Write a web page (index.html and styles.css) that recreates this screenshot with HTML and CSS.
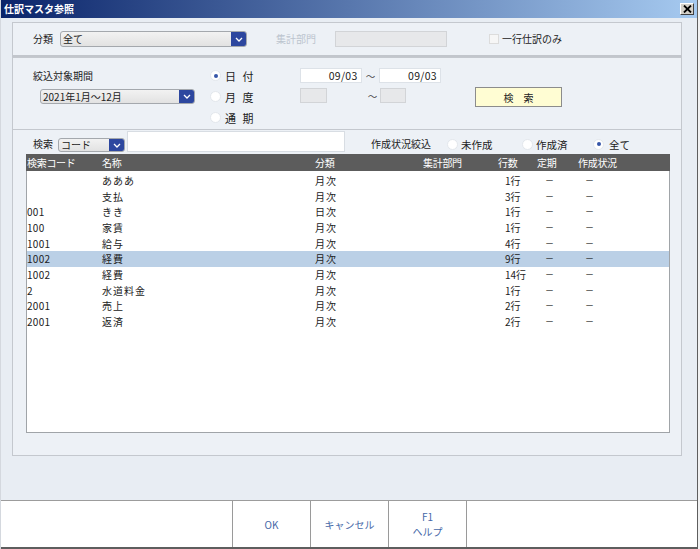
FILE: index.html
```html
<!DOCTYPE html>
<html lang="ja">
<head>
<meta charset="utf-8">
<title>仕訳マスタ参照</title>
<link rel="stylesheet" href="styles.css">
</head>
<body>
<div class="window">
  <div class="titlebar">
    <span class="title">仕訳マスタ参照</span>
    <span class="close"><svg width="9" height="8" viewBox="0 0 9 8"><path d="M1 0.5 L8 7.5 M8 0.5 L1 7.5" stroke="#000" stroke-width="1.8" fill="none"/></svg></span>
  </div>
  <div class="main">
    <div class="panel p1">
      <span class="lbl l-bunrui">分類</span>
      <div class="select s-bunrui"><span class="sel-text">全て</span><span class="sel-btn"><svg width="8" height="5" viewBox="0 0 8 5"><path d="M1 1 L4 4 L7 1" stroke="#fff" stroke-width="1.3" fill="none"/></svg></span></div>
      <span class="lbl disabled l-shukei">集計部門</span>
      <div class="field dis i-shukei"></div>
      <span class="checkbox"></span>
      <span class="lbl l-ichigyo">一行仕訳のみ</span>
    </div>
    <div class="panel p2">
      <div class="col-period">
        <div class="lbl period-lbl">絞込対象期間</div>
        <div class="select s-period"><span class="sel-text">2021年1月～12月</span><span class="sel-btn"><svg width="8" height="5" viewBox="0 0 8 5"><path d="M1 1 L4 4 L7 1" stroke="#fff" stroke-width="1.3" fill="none"/></svg></span></div>
      </div>
      <div class="col-radio">
        <div class="radio-row"><span class="radio on"></span><span class="rlbl">日 付</span></div>
        <div class="radio-row"><span class="radio"></span><span class="rlbl">月 度</span></div>
        <div class="radio-row"><span class="radio"></span><span class="rlbl">通 期</span></div>
      </div>
      <div class="col-dates">
        <div class="date-row r1"><div class="field date">09/03</div><span class="tilde">～</span><div class="field date">09/03</div></div>
        <div class="date-row r2"><div class="field dis small"></div><span class="tilde t2">～</span><div class="field dis small2"></div></div>
      </div>
      <button class="search-btn">検 索</button>
    </div>
    <div class="panel p3">
      <div class="search-row">
        <span class="lbl l-kensaku">検索</span>
        <div class="select s-code"><span class="sel-text">コード</span><span class="sel-btn"><svg width="8" height="5" viewBox="0 0 8 5"><path d="M1 1 L4 4 L7 1" stroke="#fff" stroke-width="1.3" fill="none"/></svg></span></div>
        <div class="field search-input"></div>
        <span class="lbl l-status">作成状況絞込</span>
        <span class="opt o1"><span class="radio"></span><span class="olbl">未作成</span></span>
        <span class="opt o2"><span class="radio"></span><span class="olbl">作成済</span></span>
        <span class="opt o3"><span class="radio on"></span><span class="olbl">全て</span></span>
      </div>
      <div class="table">
        <div class="row head">
          <span class="c code">検索コード</span><span class="c name">名称</span><span class="c cls">分類</span><span class="c dept">集計部門</span><span class="c lines">行数</span><span class="c per">定期</span><span class="c stat">作成状況</span>
        </div>
        <div class="tbody">
          <div class="row"><span class="c code"></span><span class="c name">あああ</span><span class="c cls">月次</span><span class="c dept"></span><span class="c lines">1行</span><span class="c per">－</span><span class="c stat">－</span></div>
          <div class="row"><span class="c code"></span><span class="c name">支払</span><span class="c cls">月次</span><span class="c dept"></span><span class="c lines">3行</span><span class="c per">－</span><span class="c stat">－</span></div>
          <div class="row"><span class="c code">001</span><span class="c name">きき</span><span class="c cls">日次</span><span class="c dept"></span><span class="c lines">1行</span><span class="c per">－</span><span class="c stat">－</span></div>
          <div class="row"><span class="c code">100</span><span class="c name">家賃</span><span class="c cls">月次</span><span class="c dept"></span><span class="c lines">1行</span><span class="c per">－</span><span class="c stat">－</span></div>
          <div class="row"><span class="c code">1001</span><span class="c name">給与</span><span class="c cls">月次</span><span class="c dept"></span><span class="c lines">4行</span><span class="c per">－</span><span class="c stat">－</span></div>
          <div class="row sel"><span class="c code">1002</span><span class="c name">経費</span><span class="c cls">月次</span><span class="c dept"></span><span class="c lines">9行</span><span class="c per">－</span><span class="c stat">－</span></div>
          <div class="row"><span class="c code">1002</span><span class="c name">経費</span><span class="c cls">月次</span><span class="c dept"></span><span class="c lines">14行</span><span class="c per">－</span><span class="c stat">－</span></div>
          <div class="row"><span class="c code">2</span><span class="c name">水道料金</span><span class="c cls">月次</span><span class="c dept"></span><span class="c lines">1行</span><span class="c per">－</span><span class="c stat">－</span></div>
          <div class="row"><span class="c code">2001</span><span class="c name">売上</span><span class="c cls">月次</span><span class="c dept"></span><span class="c lines">2行</span><span class="c per">－</span><span class="c stat">－</span></div>
          <div class="row"><span class="c code">2001</span><span class="c name">返済</span><span class="c cls">月次</span><span class="c dept"></span><span class="c lines">2行</span><span class="c per">－</span><span class="c stat">－</span></div>
        </div>
      </div>
    </div>
  </div>
  <div class="footer">
    <div class="fcell spacer"></div>
    <div class="fcell fbtn">OK</div>
    <div class="fcell fbtn">キャンセル</div>
    <div class="fcell fbtn two"><span>F1</span><span>ヘルプ</span></div>
    <div class="fcell rest"></div>
  </div>
</div>
</body>
</html>
```
FILE: styles.css
```css
* { box-sizing: border-box; }
html, body { margin: 0; padding: 0; }
body {
  width: 700px;
  height: 549px;
  overflow: hidden;
  background: #f2f2f2;
  font-family: "Noto Sans CJK JP", "Noto Sans", sans-serif;
  font-size: 10px;
  color: #222;
}
.window {
  width: 698px;
  height: 549px;
  display: flex;
  flex-direction: column;
  background: #e8edf3;
  border-left: 1px solid #d4d8de;
  border-right: 1px solid #5e5e5e;
}
.titlebar {
  height: 18px;
  flex: 0 0 18px;
  display: flex;
  align-items: center;
  justify-content: space-between;
  background: linear-gradient(to right, #0a246a, #a6caf0);
  padding: 0 3px 0 3px;
}
.title {
  color: #fff;
  font-weight: bold;
  font-size: 10px;
  letter-spacing: 0;
  line-height: 18px;
}
.close {
  width: 14px;
  height: 12px;
  background: #d4d0c8;
  border: 1px solid;
  border-color: #fff #404040 #404040 #fff;
  display: flex;
  align-items: center;
  justify-content: center;
}
.main {
  flex: 1;
  padding: 4px 0 0 11px;
}
.panel {
  width: 670px;
  background: #edf1f6;
  border: 1px solid #c4c8ce;
}
.lbl { line-height: 16px; white-space: nowrap; }
.disabled { color: #bcc4ce; }

/* panel 1 */
.p1 {
  height: 35px;
  display: flex;
  align-items: center;
  border-bottom: 2px solid #c2c6cc;
}
.l-bunrui { margin-left: 20px; width: 27px; }
.select {
  display: flex;
  align-items: stretch;
  background: linear-gradient(#f2f2f2, #e2e2e2);
  border: 1px solid #a4a8ad;
  border-radius: 3px;
  overflow: hidden;
}
.sel-text { flex: 1; padding-left: 2px; line-height: 14px; white-space: nowrap; font-size: 10px; }
.sel-btn {
  width: 15px;
  background: #2d479f;
  display: flex;
  align-items: center;
  justify-content: center;
}
.s-bunrui { width: 187px; height: 16px; }
.l-shukei { margin-left: 29px; width: 59px; }
.field {
  background: #fff;
  border: 1px solid #dde2e8;
}
.field.dis { background: #e7e8ea; border-color: #d2d4d7; }
.i-shukei { width: 112px; height: 16px; }
.checkbox {
  margin-left: 42px;
  width: 10px;
  height: 10px;
  background: #f6f6f6;
  border: 1px solid #dcdcdc;
}
.l-ichigyo { margin-left: 3px; }

/* panel 2 */
.p2 {
  height: 72px;
  border-top: 1px solid #c4c8ce;
  border-bottom: none;
  display: flex;
  align-items: flex-start;
  padding-top: 7px;
}
.col-period { margin-left: 20px; width: 177px; }
.period-lbl { line-height: 21px; }
.s-period { margin-top: 3px; margin-left: 7px; width: 155px; height: 15px; }
.s-period .sel-text { line-height: 13px; }
.col-radio { width: 90px; }
.radio-row { height: 21px; display: flex; align-items: center; }
.radio {
  width: 11px;
  height: 11px;
  border-radius: 50%;
  background: #fff;
  border: 1px solid #e3e7ec;
  display: inline-flex;
  align-items: center;
  justify-content: center;
  flex: 0 0 11px;
}
.radio.on::after {
  content: "";
  width: 4px;
  height: 4px;
  border-radius: 50%;
  background: #3656a8;
}
.rlbl { margin-left: 4px; font-size: 11px; letter-spacing: 2px; }
.col-dates { width: 141px; }
.date-row { display: flex; align-items: center; }
.date-row.r1 { margin-top: 3px; height: 15px; }
.date-row.r2 { margin-top: 5px; height: 15px; }
.date {
  width: 62px;
  height: 15px;
  text-align: right;
  padding-right: 3px;
  line-height: 13px;
  font-size: 10.5px;
  letter-spacing: 0.3px;
}
.tilde { width: 18px; text-align: center; color: #444; font-size: 9.5px; }
.small { width: 27px; height: 15px; }
.date-row.r2 .small { margin-right: 38px; }
.tilde.t2 { width: 15px; }
.small2 { width: 26px; height: 15px; }
.search-btn {
  margin-left: 34px;
  margin-top: 22px;
  width: 87px;
  height: 20px;
  background: #fffdd3;
  border: 1px solid #8c8c8c;
  font-family: inherit;
  font-size: 10px;
  letter-spacing: 4px;
  text-indent: 4px;
  color: #222;
  padding: 0;
  border-radius: 0;
}

/* panel 3 */
.p3 {
  height: 327px;
}
.search-row {
  height: 22px;
  display: flex;
  align-items: flex-end;
}
.l-kensaku { margin-left: 20px; width: 25px; }
.s-code { width: 67px; height: 14px; }
.s-code .sel-text { line-height: 12px; }
.search-input { margin-left: 2px; width: 218px; height: 21px; border-color: #d8dde3; }
.l-status { margin-left: 26px; width: 76px; }
.opt { display: inline-flex; align-items: center; height: 16px; }
.olbl { margin-left: 3px; font-size: 10.5px; }
.o1 { width: 75px; }
.o2 { width: 71px; }
.o3 .olbl { margin-left: 5px; }

.table {
  margin-top: 2px;
  margin-left: 13px;
  width: 644px;
  height: 279px;
  display: flex;
  flex-direction: column;
}
.row {
  display: grid;
  grid-template-columns: 75px 213px 108px 75px 39px 41px 1fr;
  white-space: nowrap;
}
.row.head {
  height: 17px;
  background: #5c5c5c;
  color: #fff;
  line-height: 17px;
  font-size: 10px;
  letter-spacing: -0.3px;
  padding-left: 1px;
}
.tbody {
  flex: 1;
  background: #fff;
  border: 1px solid #a0a4a8;
  border-top: none;
  padding-top: 2px;
}
.tbody .row {
  height: 15.67px;
  line-height: 15.67px;
  font-size: 10px;
}
.tbody .row.sel { background: #bbd0e6; }
.tbody .name, .tbody .cls { letter-spacing: 1px; }
.tbody .code { padding-left: 0; letter-spacing: 0.3px; }
.tbody .lines { padding-left: 7px; }
.tbody .per { padding-left: 8px; font-size: 9px; }
.tbody .stat { padding-left: 7px; font-size: 9px; }

/* footer */
.footer {
  flex: 0 0 49px;
  height: 49px;
  display: flex;
  background: #fff;
  border-top: 1px solid #9c9c9c;
  border-bottom: 2px solid #5e5e5e;
}
.fcell { height: 100%; }
.spacer { width: 231px; }
.fbtn {
  width: 78px;
  border-left: 1px solid #9a9a9a;
  display: flex;
  flex-direction: column;
  align-items: center;
  justify-content: center;
  color: #4668a8;
  font-size: 10px;
  line-height: 15px;
}
.rest { flex: 1; border-left: 1px solid #9a9a9a; }
```
